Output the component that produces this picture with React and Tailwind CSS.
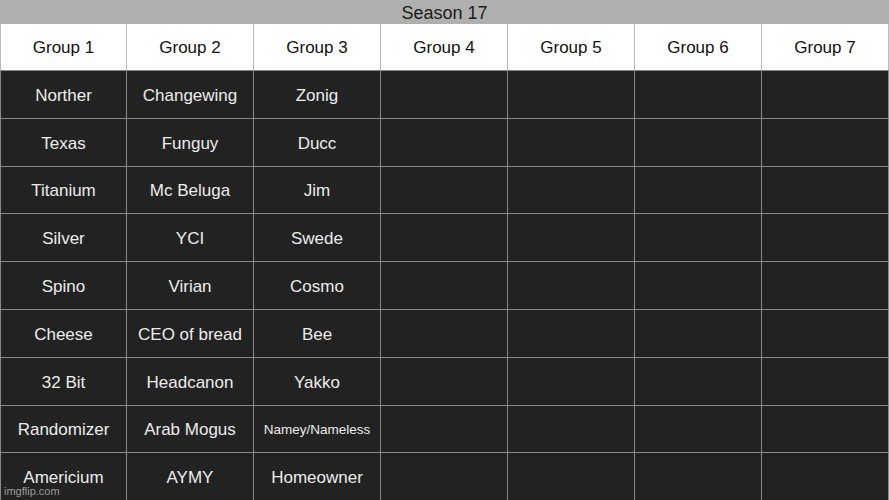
import React from "react";

const rows = [
  ["Norther", "Changewing", "Zonig"],
  ["Texas", "Funguy", "Ducc"],
  ["Titanium", "Mc Beluga", "Jim"],
  ["Silver", "YCI", "Swede"],
  ["Spino", "Virian", "Cosmo"],
  ["Cheese", "CEO of bread", "Bee"],
  ["32 Bit", "Headcanon", "Yakko"],
  ["Randomizer", "Arab Mogus", "Namey/Nameless"],
  ["Americium", "AYMY", "Homeowner"],
];

export default function App() {
  const font = { fontFamily: '"Liberation Sans", Arial, sans-serif' };
  return (
    <div className="relative w-[889px] h-[500px] overflow-hidden bg-[#8a8a8a]" style={font}>
      <div className="h-[24px] pt-[2px] bg-[#afafaf] flex items-center justify-center text-[18px] text-[#1c1c1c]">
        Season 17
      </div>
      <div className="grid grid-cols-[125px_repeat(6,126px)] gap-x-px pl-px pr-px bg-[#bdbdbd] h-[46px]">
        {[1, 2, 3, 4, 5, 6, 7].map((n) => (
          <div key={n} className="bg-white pt-[2px] flex items-center justify-center text-[17px] text-[#111]">
            Group {n}
          </div>
        ))}
      </div>
      <div className="grid grid-cols-[125px_repeat(6,126px)] grid-rows-[47px_47px_46px_47px_47px_47px_47px_46px_47px] gap-px pl-px pr-px pt-px bg-[#8a8a8a]">
        {rows.map((r, i) =>
          [0, 1, 2, 3, 4, 5, 6].map((c) => {
            const t = r[c] || "";
            return (
              <div
                key={i + "-" + c}
                className={
                  "bg-[#222222] pt-[2px] flex items-center justify-center text-[#ececec] " +
                  (t === "Namey/Nameless" ? "text-[13.5px]" : "text-[17px]")
                }
              >
                {t}
              </div>
            );
          })
        )}
      </div>
      <div className="absolute left-[4px] bottom-[3px] text-[11px] text-[#9a9a9a] leading-none">imgflip.com</div>
    </div>
  );
}
